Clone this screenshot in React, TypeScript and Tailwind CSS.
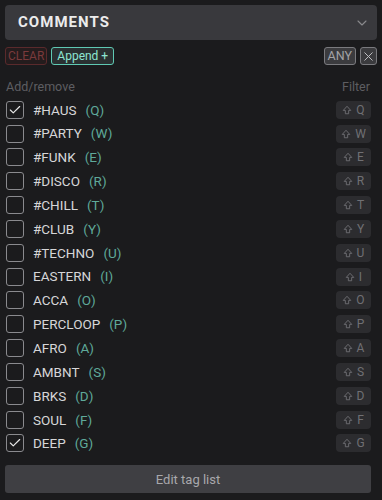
import { Check, ChevronDown, X } from "lucide-react";

const tags = [
  { name: "#HAUS", key: "Q", on: true },
  { name: "#PARTY", key: "W" },
  { name: "#FUNK", key: "E" },
  { name: "#DISCO", key: "R" },
  { name: "#CHILL", key: "T" },
  { name: "#CLUB", key: "Y" },
  { name: "#TECHNO", key: "U" },
  { name: "EASTERN", key: "I" },
  { name: "ACCA", key: "O" },
  { name: "PERCLOOP", key: "P" },
  { name: "AFRO", key: "A" },
  { name: "AMBNT", key: "S" },
  { name: "BRKS", key: "D" },
  { name: "SOUL", key: "F" },
  { name: "DEEP", key: "G", on: true },
];

function ShiftIcon() {
  return (
    <svg width="10" height="10" viewBox="0 0 12 12" fill="none" aria-hidden>
      <path
        d="M6 1.5 L10.5 6.5 H8 V10.5 H4 V6.5 H1.5 Z"
        stroke="currentColor"
        strokeWidth="1.1"
        strokeLinejoin="round"
      />
    </svg>
  );
}

export default function App() {
  return (
    <div
      className="w-[382px] h-[500px] bg-[#1b1b1d] px-[5px] pt-[5px] overflow-hidden"
      style={{ fontFamily: "Roboto, 'Noto Sans', sans-serif" }}
    >
      <div className="h-[35px] rounded-[4px] bg-[#39393d] flex items-center justify-between pl-[13px] pr-[7px]">
        <span className="text-[15px] font-bold tracking-[0.07em] text-[#ececec]">
          COMMENTS
        </span>
        <ChevronDown size={16} strokeWidth={1.6} className="text-[#8a8a8e]" />
      </div>

      <div className="mt-[7px] flex items-center h-[18px]">
        <span className="h-[18px] px-[2px] flex items-center rounded-[3px] border border-[#5a2a2c] bg-[#241c1d] text-[12px] text-[#7a3a3c]">
          CLEAR
        </span>
        <span className="ml-[4px] h-[18px] px-[5px] flex items-center rounded-[3px] border border-[#5fc9b3] bg-[#2a3031] text-[12px] text-[#8ee6d2]">
          Append +
        </span>
        <span className="ml-auto h-[18px] px-[3px] flex items-center rounded-[3px] border border-[#7a7a7e] bg-[#3b3b3e] text-[12.5px] text-[#a3a3a6]">
          ANY
        </span>
        <span className="ml-[4px] h-[18px] w-[17px] flex items-center justify-center rounded-[3px] border border-[#7a7a7e] bg-[#3b3b3e] text-[#bdbdc0]">
          <X size={15} strokeWidth={1.6} />
        </span>
      </div>

      <div className="mt-[13px] flex justify-between pr-[7px] text-[12.5px] text-[#5e5e62]">
        <span className="pl-[1px]">Add/remove</span>
        <span>Filter</span>
      </div>

      <div className="mt-[1px] flex flex-col pr-[6px]">
        {tags.map((t) => (
          <div key={t.name} className="h-[23.85px] flex items-center">
            <span className="ml-[1px] w-[18px] h-[18px] rounded-[3px] border border-[#8a8a8e] flex items-center justify-center text-[#e8e8e8]">
              {t.on && <Check size={14} strokeWidth={2} />}
            </span>
            <span className="ml-[9px] text-[13.5px] text-[#d6d6d8]">
              {t.name}
            </span>
            <span className="ml-[9px] text-[13.5px] text-[#5fa99a]">
              ({t.key})
            </span>
            <span className="ml-auto h-[18px] w-[35px] rounded-[4px] bg-[#2c2c2f] flex items-center justify-center gap-[4px] text-[12px] text-[#707074]">
              <ShiftIcon />
              {t.key}
            </span>
          </div>
        ))}
      </div>

      <div className="mt-[10px] mr-[6px] h-[28px] rounded-[3px] bg-[#3f3f43] flex items-center justify-center text-[13px] text-[#a8a8ac]">
        Edit tag list
      </div>
    </div>
  );
}
